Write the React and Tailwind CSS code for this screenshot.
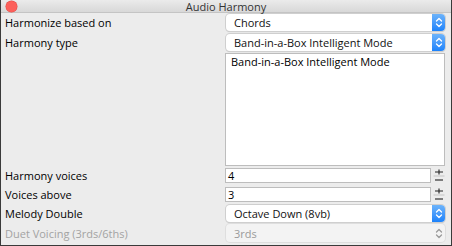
import React from "react";

function Chevrons({ color = "white" }) {
  return (
    <svg width="8" height="11" viewBox="0 0 8 11" fill="none" stroke={color} strokeWidth="1.3" strokeLinecap="round" strokeLinejoin="round">
      <path d="M1.5 4 L4 1.5 L6.5 4" />
      <path d="M1.5 7 L4 9.5 L6.5 7" />
    </svg>
  );
}

function Select({ value, disabled }) {
  return (
    <div
      className={
        "flex h-full w-[219px] items-center justify-between rounded-[4px] pl-[8px] " +
        (disabled
          ? "bg-[#f3f3f3] text-[#9a9a9a] shadow-[0_0_0_1px_#dedede]"
          : "bg-white text-[#111] shadow-[0_0_0_1px_#cfcfcf,0_1px_1px_#bdbdbd]")
      }
    >
      <span className="leading-none">{value}</span>
      {disabled ? (
        <div className="flex h-full w-[13px] items-center justify-center">
          <Chevrons color="#9a9a9a" />
        </div>
      ) : (
        <div className="flex h-full w-[13px] items-center justify-center rounded-r-[4px] bg-gradient-to-b from-[#6cb3fa] to-[#1a82fb]">
          <Chevrons />
        </div>
      )}
    </div>
  );
}

function NumberField({ value }) {
  return (
    <div className="flex h-full w-[220px] items-stretch">
      <div className="flex flex-1 items-center border border-[#bdbdbd] bg-white pl-[2px] text-[#000]">
        <span className="leading-none">{value}</span>
      </div>
      <div className="ml-[1px] flex w-[13px] items-center justify-center">
        <svg width="12" height="16" viewBox="0 0 12 16" fill="none">
          <path d="M6 1.5 V6.5 M2 4 H10" stroke="#222" strokeWidth="1.1" />
          <path d="M0.5 8 H11.5" stroke="#c4c4c4" strokeWidth="1" />
          <path d="M2 12 H10" stroke="#222" strokeWidth="1.1" />
        </svg>
      </div>
    </div>
  );
}

function Label({ children, muted }) {
  return (
    <div className={"pl-[4px] leading-none " + (muted ? "text-[#a3a3a3]" : "text-[#000]")}>
      {children}
    </div>
  );
}

export default function App() {
  return (
    <div
      className="flex h-[246px] w-[452px] flex-col overflow-hidden border-x border-b border-[#3a3a3a] bg-[#ececec] text-[11px]"
      style={{ fontFamily: '"Open Sans", "Noto Sans", sans-serif' }}
    >
      <div className="relative flex h-[13px] shrink-0 items-center justify-center border-b border-[#c4c4c4] bg-gradient-to-b from-[#ebebeb] to-[#d8d8d8]">
        <div className="absolute left-[5px] top-[1px] h-[11px] w-[11px] rounded-full bg-[#fc605b] shadow-[0_0_0_0.5px_#de4a45]" />
        <span className="text-[11px] leading-none text-[#333]">Audio Harmony</span>
      </div>

      <div className="flex flex-1 flex-col">
        <div className="mt-[1px] flex h-[17px] items-center justify-between pr-[6px]">
          <Label>Harmonize based on</Label>
          <Select value="Chords" />
        </div>
        <div className="mt-[3px] flex h-[17px] items-center justify-between pr-[6px]">
          <Label>Harmony type</Label>
          <Select value="Band-in-a-Box Intelligent Mode" />
        </div>
        <div className="mt-[2px] flex justify-end pr-[6px]">
          <div className="h-[113px] w-[220px] border border-[#bdbdbd] bg-white px-[5px] pt-[2px] leading-none text-[#000]">
            Band-in-a-Box Intelligent Mode
          </div>
        </div>
        <div className="mt-[2px] flex h-[15px] items-center justify-between pr-[6px]">
          <Label>Harmony voices</Label>
          <NumberField value="4" />
        </div>
        <div className="mt-[4px] flex h-[15px] items-center justify-between pr-[6px]">
          <Label>Voices above</Label>
          <NumberField value="3" />
        </div>
        <div className="mt-[3px] flex h-[17px] items-center justify-between pr-[6px]">
          <Label>Melody Double</Label>
          <Select value="Octave Down (8vb)" />
        </div>
        <div className="mt-[2px] flex h-[18px] items-center justify-between pr-[6px]">
          <Label muted>Duet Voicing (3rds/6ths)</Label>
          <Select value="3rds" disabled />
        </div>
      </div>
    </div>
  );
}
